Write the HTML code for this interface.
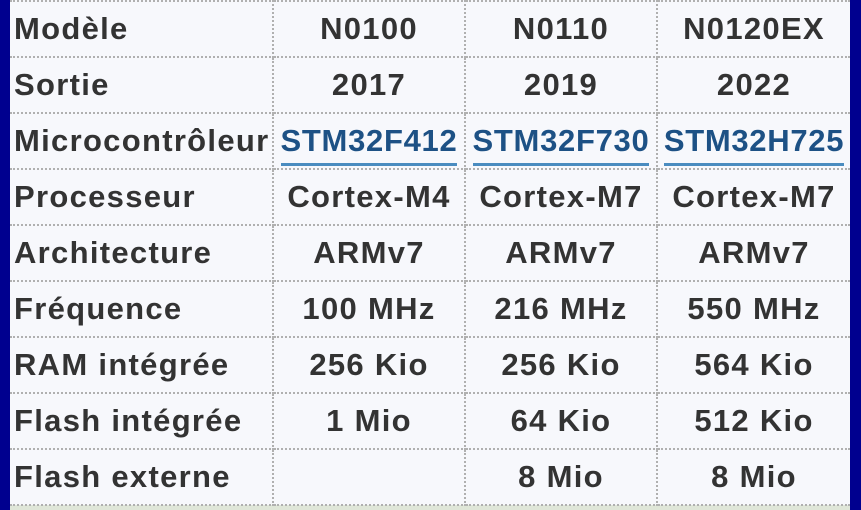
<!DOCTYPE html>
<html><head><meta charset="utf-8"><style>
html,body{margin:0;padding:0;}
body{width:861px;height:510px;overflow:hidden;background:#dfe6d8;position:relative;font-family:"Liberation Sans",sans-serif;}
.bl{position:absolute;left:0;top:0;width:10px;height:510px;background:#00008f;}
.br{position:absolute;left:850px;top:0;width:11px;height:510px;background:#00008f;}
.panel{position:absolute;left:10px;top:0;width:840px;height:505px;background:#f7f8fc;}
table{position:absolute;left:10px;top:0px;border-collapse:collapse;table-layout:fixed;}
td{height:54px;box-sizing:content-box;border:2px dotted #b0b0b0;padding:0;font-weight:bold;font-size:31px;letter-spacing:1.3px;color:#333;text-align:center;white-space:nowrap;overflow:hidden;}
td:first-child{text-align:left;padding-left:4px;border-left:none;}
td:last-child{border-right:none;}
a{color:#1d5185;text-decoration:none;border-bottom:3px solid #4a8cc0;padding-bottom:5px;letter-spacing:0.7px;}
</style></head><body>
<div class="panel"></div>
<div class="bl"></div><div class="br"></div>
<table>
<colgroup><col style="width:263px"><col style="width:192px"><col style="width:192px"><col style="width:193px"></colgroup>
<tr><td>Modèle</td><td>N0100</td><td>N0110</td><td>N0120EX</td></tr>
<tr><td>Sortie</td><td>2017</td><td>2019</td><td>2022</td></tr>
<tr><td>Microcontrôleur</td><td><a>STM32F412</a></td><td><a>STM32F730</a></td><td><a>STM32H725</a></td></tr>
<tr><td>Processeur</td><td>Cortex-M4</td><td>Cortex-M7</td><td>Cortex-M7</td></tr>
<tr><td>Architecture</td><td>ARMv7</td><td>ARMv7</td><td>ARMv7</td></tr>
<tr><td>Fréquence</td><td>100 MHz</td><td>216 MHz</td><td>550 MHz</td></tr>
<tr><td>RAM intégrée</td><td>256 Kio</td><td>256 Kio</td><td>564 Kio</td></tr>
<tr><td>Flash intégrée</td><td>1 Mio</td><td>64 Kio</td><td>512 Kio</td></tr>
<tr><td>Flash externe</td><td></td><td>8 Mio</td><td>8 Mio</td></tr>
</table>
</body></html>
